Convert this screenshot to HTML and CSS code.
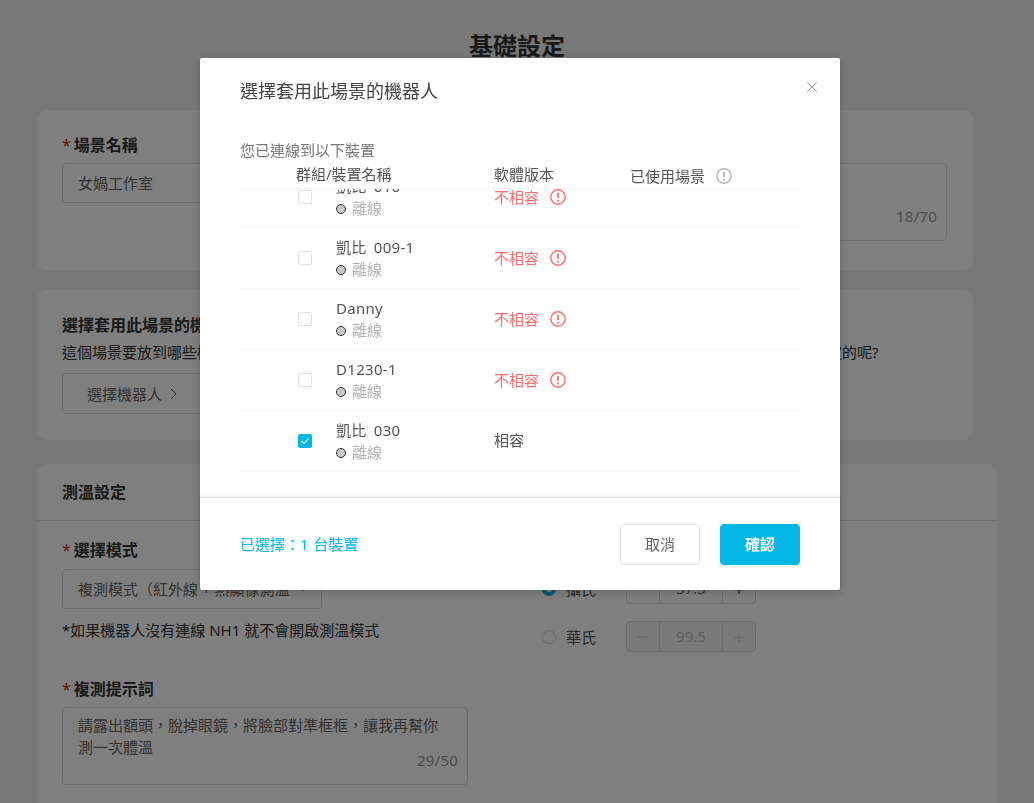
FILE: index.html
```html
<!DOCTYPE html>
<html lang="zh-Hant">
<head>
  <meta charset="UTF-8" />
  <title>基礎設定</title>
  <link rel="stylesheet" href="styles.css">
</head>
<body>
  <main class="page">
    <h1 class="page-title">基礎設定</h1>

    <section class="card card-name">
      <div class="field">
        <div class="label"><span class="req">*</span>場景名稱</div>
        <div class="input">女媧工作室</div>
      </div>
      <div class="field">
        <div class="label">場景描述</div>
        <div class="textarea textarea-desc"><span class="count">18/70</span></div>
      </div>
    </section>

    <section class="card card-robot">
      <div class="label">選擇套用此場景的機器人</div>
      <p class="desc">這個場景要放到哪些機器人上面使用？請選擇要套用的機器人，之後也都可以隨時回到這裡再調整，還是有其他想設定的呢?</p>
      <div class="pick-btn">選擇機器人
        <svg width="7" height="12" viewBox="0 0 7 12"><path d="M1 1l5 5-5 5" fill="none" stroke="#555" stroke-width="1"/></svg>
      </div>
    </section>

    <section class="card card-temp">
      <div class="card-head">測溫設定</div>
      <div class="temp-body">
        <div class="temp-left">
          <div class="label"><span class="req">*</span>選擇模式</div>
          <div class="input select">
            <span>複測模式（紅外線 + 熱顯像測溫，</span>
            <svg width="10" height="6" viewBox="0 0 10 6"><path d="M1 1l4 4 4-4" fill="none" stroke="#999" stroke-width="1"/></svg>
          </div>
          <p class="note">*如果機器人沒有連線 NH1 就不會開啟測溫模式</p>
          <div class="label label-gap"><span class="req">*</span>複測提示詞</div>
          <div class="textarea textarea-tip">請露出額頭，脫掉眼鏡，將臉部對準框框，讓我再幫你測一次體溫<span class="count">29/50</span></div>
        </div>
        <div class="temp-right">
          <div class="unit-row">
            <span class="radio radio-on"></span><span class="unit-name">攝氏</span>
            <div class="stepper"><span class="step">−</span><span class="val">37.5</span><span class="step">+</span></div>
          </div>
          <div class="unit-row">
            <span class="radio"></span><span class="unit-name">華氏</span>
            <div class="stepper stepper-off"><span class="step">−</span><span class="val">99.5</span><span class="step">+</span></div>
          </div>
        </div>
      </div>
    </section>
  </main>

  <div class="overlay">
    <div class="modal">
      <svg class="close" width="12" height="12" viewBox="0 0 12 12"><path d="M1 1l10 10M11 1L1 11" fill="none" stroke="#999" stroke-width="1"/></svg>
      <div class="modal-body">
        <h2 class="modal-title">選擇套用此場景的機器人</h2>
        <p class="connected">您已連線到以下裝置</p>
        <div class="cols table-head">
          <span></span>
          <span>群組/裝置名稱</span>
          <span>軟體版本</span>
          <span class="used">已使用場景
            <svg class="alert" width="16" height="16" viewBox="0 0 16 16"><circle cx="8" cy="8" r="7.2" fill="none" stroke="#b5b5b5" stroke-width="1.4"/><path d="M8 3.8v5.2M8 10.8v1.6" stroke="#b5b5b5" stroke-width="1.8"/></svg>
          </span>
        </div>
        <div class="list-clip">
          <div class="list">
            <div class="cols row">
              <span></span>
              <div class="device"><span class="check"></span><div><div class="name">凱比 010</div><div class="status"><i class="dot"></i>離線</div></div></div>
              <div class="bad">不相容<svg class="alert" width="16" height="16" viewBox="0 0 16 16"><circle cx="8" cy="8" r="7.2" fill="none" stroke="#ff6b6b" stroke-width="1.4"/><path d="M8 3.8v5.2M8 10.8v1.6" stroke="#ff6b6b" stroke-width="1.8"/></svg></div>
            </div>
            <div class="cols row">
              <span></span>
              <div class="device"><span class="check"></span><div><div class="name">凱比 009-1</div><div class="status"><i class="dot"></i>離線</div></div></div>
              <div class="bad">不相容<svg class="alert" width="16" height="16" viewBox="0 0 16 16"><circle cx="8" cy="8" r="7.2" fill="none" stroke="#ff6b6b" stroke-width="1.4"/><path d="M8 3.8v5.2M8 10.8v1.6" stroke="#ff6b6b" stroke-width="1.8"/></svg></div>
            </div>
            <div class="cols row">
              <span></span>
              <div class="device"><span class="check"></span><div><div class="name">Danny</div><div class="status"><i class="dot"></i>離線</div></div></div>
              <div class="bad">不相容<svg class="alert" width="16" height="16" viewBox="0 0 16 16"><circle cx="8" cy="8" r="7.2" fill="none" stroke="#ff6b6b" stroke-width="1.4"/><path d="M8 3.8v5.2M8 10.8v1.6" stroke="#ff6b6b" stroke-width="1.8"/></svg></div>
            </div>
            <div class="cols row">
              <span></span>
              <div class="device"><span class="check"></span><div><div class="name">D1230-1</div><div class="status"><i class="dot"></i>離線</div></div></div>
              <div class="bad">不相容<svg class="alert" width="16" height="16" viewBox="0 0 16 16"><circle cx="8" cy="8" r="7.2" fill="none" stroke="#ff6b6b" stroke-width="1.4"/><path d="M8 3.8v5.2M8 10.8v1.6" stroke="#ff6b6b" stroke-width="1.8"/></svg></div>
            </div>
            <div class="cols row">
              <span></span>
              <div class="device"><span class="check check-on"><svg width="10" height="8" viewBox="0 0 10 8"><path d="M1.5 4l2.5 2.5 4.5-5" fill="none" stroke="#fff" stroke-width="1.1"/></svg></span><div><div class="name">凱比 030</div><div class="status"><i class="dot"></i>離線</div></div></div>
              <div class="ok">相容</div>
            </div>
          </div>
        </div>
      </div>
      <div class="modal-foot">
        <span class="picked">已選擇：1 台裝置</span>
        <div class="foot-btns">
          <div class="btn">取消</div>
          <div class="btn btn-primary">確認</div>
        </div>
      </div>
    </div>
  </div>
</body>
</html>
```

FILE: styles.css
```css
* {
  box-sizing: border-box;
}

body {
  margin: 0;
  height: 803px;
  overflow: hidden;
  background: #f0f0f0;
  color: #333;
  font-family: "Noto Sans", "Noto Sans CJK SC", sans-serif;
  font-size: 15px;
  line-height: 22px;
}

.page {
  padding: 30px 37px 0;
}

.page-title {
  margin: 0 0 48px;
  font-size: 24px;
  line-height: 32px;
  text-align: center;
  color: #333;
}

.card {
  background: #fff;
  border-radius: 10px;
  width: 936px;
  margin-bottom: 20px;
}

.card-name {
  display: flex;
  justify-content: space-between;
  height: 160px;
  padding: 24px 26px 0 25px;
}

.card-robot {
  height: 150px;
  padding: 24px 25px 0;
}

.card-temp {
  width: 960px;
  margin-top: 24px;
  margin-bottom: 0;
  height: 339px;
  border-radius: 10px 10px 0 0;
}

.card-head {
  height: 57px;
  padding: 17px 25px 0;
  border-bottom: 1px solid #e4e4e4;
  font-size: 16px;
  font-weight: 700;
}

.label {
  font-size: 16px;
  font-weight: 700;
  color: #333;
}

.req {
  color: #e02020;
  margin-right: 3px;
  font-weight: 400;
}

.field {
  width: 400px;
}

.input {
  height: 40px;
  margin-top: 7px;
  padding: 0 15px;
  display: flex;
  align-items: center;
  border: 1px solid #d8d8d8;
  border-radius: 4px;
  color: #666;
}

.textarea {
  position: relative;
  margin-top: 7px;
  padding: 6px 15px;
  border: 1px solid #d8d8d8;
  border-radius: 4px;
  color: #666;
}

.textarea-desc {
  height: 78px;
}

.textarea-tip {
  width: 406px;
  height: 78px;
}

.count {
  position: absolute;
  right: 9px;
  bottom: 13px;
  color: #999;
  letter-spacing: 0.2px;
}

.desc {
  margin: 5px 0 10px;
  white-space: nowrap;
}

.pick-btn {
  width: 144px;
  height: 41px;
  padding-left: 24px;
  display: flex;
  align-items: center;
  gap: 8px;
  border: 1px solid #d8d8d8;
  border-radius: 4px;
  color: #666;
}

.temp-body {
  display: flex;
  padding: 18px 25px 0;
  gap: 74px;
}

.temp-left {
  width: 406px;
}

.select {
  width: 260px;
  margin-top: 8px;
  padding-right: 13px;
  justify-content: space-between;
  overflow: hidden;
  white-space: nowrap;
}

.select span {
  overflow: hidden;
}

.select svg {
  flex: none;
  margin-left: 4px;
}

.note {
  margin: 10px 0 37px;
}

.temp-right {
  padding-top: 34px;
}

.unit-row {
  display: flex;
  align-items: center;
  height: 31px;
  margin-bottom: 17px;
}

.radio {
  width: 14px;
  height: 14px;
  border: 1px solid #ccc;
  border-radius: 50%;
  margin-right: 10px;
}

.radio-on {
  border: 4px solid #00b7e6;
}

.unit-name {
  width: 30px;
  margin-right: 30px;
  color: #555;
}

.stepper {
  display: flex;
  width: 130px;
  height: 31px;
  border: 1px solid #d8d8d8;
  border-radius: 4px;
  color: #666;
  text-align: center;
  line-height: 29px;
}

.step {
  width: 32px;
  font-size: 20px;
}

.stepper .val {
  flex: 1;
  border-left: 1px solid #d8d8d8;
  border-right: 1px solid #d8d8d8;
}

.stepper-off {
  background: #f5f5f5;
  color: #bbb;
}

.stepper-off .step {
  color: #d4d4d4;
}

.overlay {
  position: fixed;
  top: 0;
  left: 0;
  right: 0;
  bottom: 0;
  padding: 58px 0 0 200px;
  background: rgba(0, 0, 0, 0.5);
}

.modal {
  position: relative;
  width: 640px;
  height: 532px;
  display: flex;
  flex-direction: column;
  background: #fff;
  border-radius: 2px;
  box-shadow: 0 2px 8px rgba(0, 0, 0, 0.2);
}

.close {
  position: absolute;
  top: 23px;
  right: 22px;
}

.modal-body {
  flex: 1;
  min-height: 0;
  padding: 20px 40px 0;
}

.modal-title {
  margin: 0;
  font-size: 18px;
  font-weight: 400;
  line-height: 26px;
  color: #444;
}

.connected {
  margin: 36px 0 0;
  line-height: 20px;
  color: #777;
}

.cols {
  display: grid;
  grid-template-columns: 56px 198px 136px 1fr;
  align-items: center;
}

.table-head {
  height: 29px;
  border-bottom: 1px solid #f1f6f6;
  color: #555;
}

.used {
  display: flex;
  align-items: center;
  gap: 11px;
  padding-top: 3px;
}

.list-clip {
  height: 309px;
  overflow: hidden;
}

.list {
  margin-top: -22px;
}

.row {
  height: 61px;
  border-bottom: 1px solid #f1f6f6;
}

.device {
  display: flex;
  align-items: center;
  gap: 24px;
  padding-left: 2px;
}

.check {
  flex: none;
  width: 14px;
  height: 14px;
  display: flex;
  align-items: center;
  justify-content: center;
  border: 1px solid #dfdfe6;
  border-radius: 2px;
}

.check-on {
  background: #00b7e6;
  border-color: #00b7e6;
}

.name {
  margin-top: -1px;
  color: #555;
  word-spacing: 3px;
  letter-spacing: 0.3px;
}

.status {
  display: flex;
  align-items: center;
  margin-bottom: -1px;
  color: #b5b5b5;
}

.dot {
  width: 10px;
  height: 10px;
  margin: 2px 6px 0 0;
  background: #c8c8c8;
  border: 1px solid #333;
  border-radius: 50%;
}

.bad {
  display: flex;
  align-items: center;
  gap: 11px;
  color: #ff6b6b;
}

.ok {
  margin-top: -2px;
  color: #555;
}

.modal-foot {
  height: 92px;
  padding: 0 40px;
  display: flex;
  align-items: center;
  justify-content: space-between;
  box-shadow: 0 -1px 3px rgba(0, 0, 0, 0.15);
}

.picked {
  color: #00b7e6;
  word-spacing: 1px;
}

.foot-btns {
  display: flex;
  gap: 20px;
}

.btn {
  width: 80px;
  height: 41px;
  line-height: 39px;
  text-align: center;
  border: 1px solid #dcdce4;
  border-radius: 4px;
  color: #666;
}

.btn-primary {
  background: #00b7e6;
  border-color: #00b7e6;
  color: #fff;
  font-weight: 700;
}
```
